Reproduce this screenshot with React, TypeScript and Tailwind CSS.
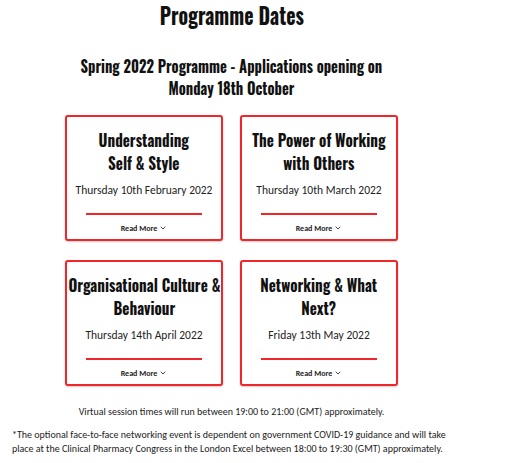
import { ChevronDown } from 'lucide-react';

const heading = { fontFamily: '"Oswald", "Liberation Sans Narrow", "DejaVu Sans Condensed", sans-serif' };
const body = { fontFamily: '"Carlito", "Lato", "Open Sans", sans-serif' };

const sessions = [
  { title: ['Understanding', 'Self & Style'], date: 'Thursday 10th February 2022' },
  { title: ['The Power of Working', 'with Others'], date: 'Thursday 10th March 2022' },
  { title: ['Organisational Culture &', 'Behaviour'], date: 'Thursday 14th April 2022' },
  { title: ['Networking & What', 'Next?'], date: 'Friday 13th May 2022' },
];

function SessionCard({ title, date }: { title: string[]; date: string }) {
  return (
    <div className="flex h-[126px] w-[158px] flex-col items-center rounded-[3px] border-2 border-[#f0262b] bg-white pt-[11px] shadow-[0_1px_2px_rgba(0,0,0,0.2)]">
      <h3 style={heading} className="scale-x-[0.89] whitespace-nowrap text-center text-[17px] font-bold leading-[23px] text-[#111]">
        {title[0]}
        <br />
        {title[1]}
      </h3>
      <p style={body} className="mt-[8px] text-[11.5px] text-[#222]">{date}</p>
      <div className="mt-[14px] h-[2px] w-[116px] bg-[#f0262b]" />
      <button style={body} className="mt-[7px] flex items-center gap-[2px] text-[8px] font-bold text-[#222]">
        Read More <ChevronDown className="h-[8px] w-[8px]" strokeWidth={2.5} />
      </button>
    </div>
  );
}

export default function App() {
  return (
    <div className="min-h-screen w-[511px] bg-white">
      <div className="flex w-[463px] flex-col items-center">
        <h1 style={heading} className="mt-[2px] scale-x-[0.86] whitespace-nowrap text-[23px] font-bold leading-[26px] text-[#111]">
          Programme Dates
        </h1>
        <h2 style={heading} className="mt-[27px] scale-x-[0.885] whitespace-nowrap text-center text-[16.5px] font-bold leading-[22px] text-[#111]">
          Spring 2022 Programme - Applications opening on
          <br />
          Monday 18th October
        </h2>
        <div className="mt-[16px] grid grid-cols-2 gap-x-[17px] gap-y-[19px]">
          {sessions.map((s) => (
            <SessionCard key={s.date} title={s.title} date={s.date} />
          ))}
        </div>
        <p style={body} className="mt-[18px] text-[10px] text-[#222]">
          Virtual session times will run between 19:00 to 21:00 (GMT) approximately.
        </p>
      </div>
      <p style={body} className="mt-[9px] w-[462px] pl-[12px] text-[10px] leading-[14px] text-[#222]">
        *The optional face-to-face networking event is dependent on government COVID-19 guidance and will take place at the Clinical Pharmacy Congress in the London Excel between 18:00 to 19:30 (GMT) approximately.
      </p>
    </div>
  );
}
